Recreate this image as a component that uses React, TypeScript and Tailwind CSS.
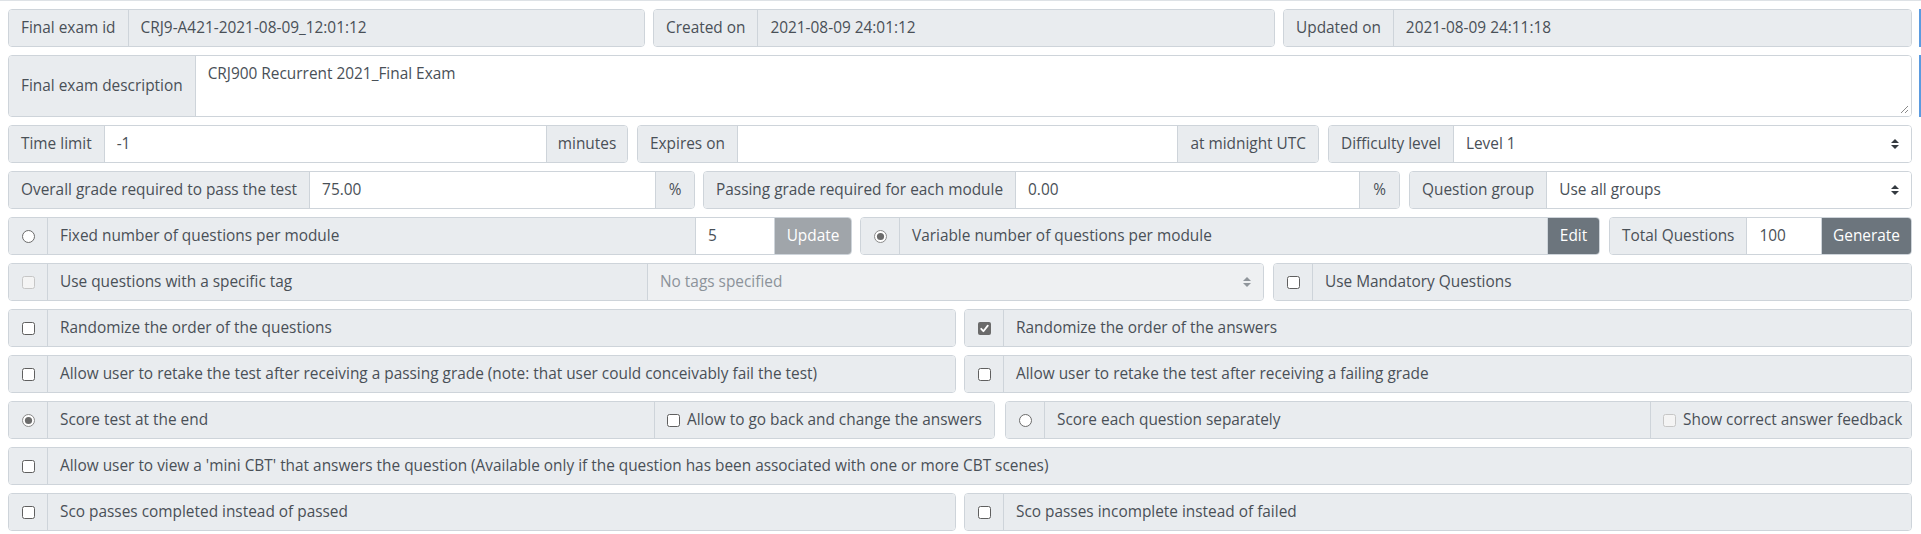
import React from 'react';

const group =
  'flex h-[38px] border border-[#ced4da] rounded-[4px] overflow-hidden [&>*+*]:border-l [&>*+*]:border-[#ced4da]';
const lbl = 'flex items-center px-3 bg-[#e9ecef] whitespace-nowrap';
const field = 'flex items-center px-3 bg-white flex-1 min-w-0 whitespace-nowrap';

function Check({ checked = false, disabled = false }: { checked?: boolean; disabled?: boolean }) {
  if (checked) {
    return (
      <svg width="13" height="13" viewBox="0 0 13 13" className="shrink-0">
        <rect x="0" y="0" width="13" height="13" rx="2" fill="#6b6b6b" />
        <path d="M3.2 6.8 L5.4 9.2 L9.8 3.6" stroke="#fff" strokeWidth="1.8" fill="none" strokeLinecap="round" strokeLinejoin="round" />
      </svg>
    );
  }
  return (
    <svg width="13" height="13" viewBox="0 0 13 13" className="shrink-0">
      <rect
        x="0.5"
        y="0.5"
        width="12"
        height="12"
        rx="2"
        fill={disabled ? '#f4f4f4' : '#fff'}
        stroke={disabled ? '#c6c6c6' : '#5f5f5f'}
      />
    </svg>
  );
}

function Radio({ checked = false }: { checked?: boolean }) {
  return (
    <svg width="13" height="13" viewBox="0 0 13 13" className="shrink-0">
      <circle cx="6.5" cy="6.5" r="6" fill="#fff" stroke={checked ? '#8a8a8a' : '#6b6b6b'} />
      {checked && <circle cx="6.5" cy="6.5" r="3.6" fill="#6b6b6b" />}
    </svg>
  );
}

function Arrows({ faded = false }: { faded?: boolean }) {
  return (
    <svg width="8" height="10" viewBox="0 0 4 5" className="shrink-0">
      <path d="M2 0L0 2h4zm0 5L0 3h4z" fill={faded ? '#8f959b' : '#343a40'} />
    </svg>
  );
}

function BoxCell({ children }: { children: React.ReactNode }) {
  return <div className="flex items-center justify-center w-[38px] shrink-0 bg-[#e9ecef]">{children}</div>;
}

function CheckGroup({ text, checked = false, className = '' }: { text: string; checked?: boolean; className?: string }) {
  return (
    <div className={`${group} ${className}`}>
      <BoxCell>
        <Check checked={checked} />
      </BoxCell>
      <div className={`${lbl} flex-1`}>{text}</div>
    </div>
  );
}

export default function App() {
  return (
    <div className="relative w-[1921px] h-[534px] overflow-hidden bg-white border-t border-[#dee2e6] font-['Open_Sans',sans-serif] text-[15.4px] leading-6 text-[#495057]">
      {/* edge of the clipped column beyond the viewport */}
      <div className="absolute right-0 top-[8px] w-[2px] h-[38px] bg-[#5b9be0]" />
      <div className="absolute right-0 top-[54px] w-[2px] h-[62px] bg-[#5b9be0]" />

      <div className="flex flex-col gap-2 pt-2 pl-2 pr-[9px]">
        {/* ids */}
        <div className="flex gap-2">
          <div className={`${group} w-[637px]`}>
            <div className={lbl}>Final exam id</div>
            <div className={`${lbl} flex-1`}>CRJ9-A421-2021-08-09_12:01:12</div>
          </div>
          <div className={`${group} w-[622px]`}>
            <div className={lbl}>Created on</div>
            <div className={`${lbl} flex-1`}>2021-08-09 24:01:12</div>
          </div>
          <div className={`${group} flex-1`}>
            <div className={lbl}>Updated on</div>
            <div className={`${lbl} flex-1`}>2021-08-09 24:11:18</div>
          </div>
        </div>

        {/* description */}
        <div className="flex h-[62px] border border-[#ced4da] rounded-[4px] overflow-hidden">
          <div className={`${lbl} border-r border-[#ced4da]`}>Final exam description</div>
          <div className="relative flex-1 bg-white px-3 py-[6px]">
            CRJ900 Recurrent 2021_Final Exam
            <svg width="9" height="9" viewBox="0 0 9 9" className="absolute right-[2px] bottom-[2px]">
              <path d="M8 1 L1 8 M8 5 L5 8" stroke="#8a8a8a" strokeWidth="1" />
            </svg>
          </div>
        </div>

        {/* time / expiry / difficulty */}
        <div className="flex gap-[9px]">
          <div className={`${group} w-[620px]`}>
            <div className={lbl}>Time limit</div>
            <div className={field}>-1</div>
            <div className={`${lbl} w-[81px] justify-center`}>minutes</div>
          </div>
          <div className={`${group} w-[682px]`}>
            <div className={lbl}>Expires on</div>
            <div className={field}></div>
            <div className={lbl}>at midnight UTC</div>
          </div>
          <div className={`${group} flex-1`}>
            <div className={lbl}>Difficulty level</div>
            <div className={`${field} justify-between`}>
              <span>Level 1</span>
              <Arrows />
            </div>
          </div>
        </div>

        {/* grades */}
        <div className="flex gap-2">
          <div className={`${group} w-[687px]`}>
            <div className={lbl}>Overall grade required to pass the test</div>
            <div className={field}>75.00</div>
            <div className={`${lbl} w-[39px] justify-center`}>%</div>
          </div>
          <div className={`${group} w-[697px]`}>
            <div className={lbl}>Passing grade required for each module</div>
            <div className={field}>0.00</div>
            <div className={`${lbl} w-[40px] justify-center`}>%</div>
          </div>
          <div className={`${group} flex-1 ml-px`}>
            <div className={lbl}>Question group</div>
            <div className={`${field} justify-between`}>
              <span>Use all groups</span>
              <Arrows />
            </div>
          </div>
        </div>

        {/* question counts */}
        <div className="flex gap-2">
          <div className={`${group} w-[844px]`}>
            <BoxCell>
              <Radio />
            </BoxCell>
            <div className={`${lbl} flex-1`}>Fixed number of questions per module</div>
            <div className="flex items-center px-3 bg-white w-[79px]">5</div>
            <div className="flex items-center justify-center w-[77px] bg-[#a0a5aa] text-white">Update</div>
          </div>
          <div className={`${group} w-[740px]`}>
            <BoxCell>
              <Radio checked />
            </BoxCell>
            <div className={`${lbl} flex-1`}>Variable number of questions per module</div>
            <div className="flex items-center justify-center w-[52px] bg-[#6c757d] text-white">Edit</div>
          </div>
          <div className={`${group} flex-1 ml-px`}>
            <div className={lbl}>Total Questions</div>
            <div className="flex items-center px-3 bg-white flex-1">100</div>
            <div className="flex items-center justify-center w-[90px] bg-[#6c757d] text-white">Generate</div>
          </div>
        </div>

        {/* tags */}
        <div className="flex gap-[9px]">
          <div className={`${group} w-[1256px]`}>
            <BoxCell>
              <Check disabled />
            </BoxCell>
            <div className={`${lbl} w-[600px]`}>Use questions with a specific tag</div>
            <div className="flex items-center justify-between px-3 flex-1 bg-[#eef0f2] text-[#8c939a]">
              <span>No tags specified</span>
              <Arrows faded />
            </div>
          </div>
          <CheckGroup className="flex-1" text="Use Mandatory Questions" />
        </div>

        <div className="flex gap-2">
          <CheckGroup className="w-[948px]" text="Randomize the order of the questions" />
          <CheckGroup className="flex-1" text="Randomize the order of the answers" checked />
        </div>

        <div className="flex gap-2">
          <CheckGroup
            className="w-[948px]"
            text="Allow user to retake the test after receiving a passing grade (note: that user could conceivably fail the test)"
          />
          <CheckGroup className="flex-1" text="Allow user to retake the test after receiving a failing grade" />
        </div>

        {/* scoring */}
        <div className="flex gap-[10px]">
          <div className={`${group} w-[987px]`}>
            <BoxCell>
              <Radio checked />
            </BoxCell>
            <div className={`${lbl} flex-1`}>Score test at the end</div>
            <div className={`${lbl} w-[340px] gap-[7px]`}>
              <Check />
              <span>Allow to go back and change the answers</span>
            </div>
          </div>
          <div className={`${group} flex-1`}>
            <BoxCell>
              <Radio />
            </BoxCell>
            <div className={`${lbl} flex-1`}>Score each question separately</div>
            <div className={`${lbl} w-[261px] gap-[7px]`}>
              <Check disabled />
              <span>Show correct answer feedback</span>
            </div>
          </div>
        </div>

        <CheckGroup text="Allow user to view a 'mini CBT' that answers the question (Available only if the question has been associated with one or more CBT scenes)" />

        <div className="flex gap-2">
          <CheckGroup className="w-[948px]" text="Sco passes completed instead of passed" />
          <CheckGroup className="flex-1" text="Sco passes incomplete instead of failed" />
        </div>
      </div>
    </div>
  );
}
